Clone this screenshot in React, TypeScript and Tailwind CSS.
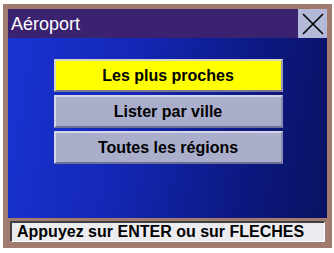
export default function App() {
  const items = ['Les plus proches', 'Lister par ville', 'Toutes les régions'];

  return (
    <div
      className="w-[334px] h-[253px] bg-white pl-[3px] pt-[4px]"
      style={{ fontFamily: '"Liberation Sans", Arial, sans-serif' }}
    >
      <div className="w-[329px] h-[244px] bg-[#a27b70] p-[5px] flex flex-col">
        {/* Title bar */}
        <div className="h-[29px] bg-[#3a2270] flex items-center justify-between">
          <span className="pl-[3px] text-white text-[18px] leading-none">Aéroport</span>
          <div className="w-[29px] h-[29px] bg-[#b5b9d9] flex items-center justify-center">
            <svg width="24" height="24" viewBox="0 0 24 24">
              <path d="M2 2 L22 22 M22 2 L2 22" stroke="#000" strokeWidth="1.6" fill="none" />
            </svg>
          </div>
        </div>

        {/* Body */}
        <div className="h-[180px] bg-[linear-gradient(100deg,#1a34d2_0%,#1428b8_35%,#0c1880_75%,#0a1260_100%)] flex flex-col items-center pt-[21px] gap-[3px] pl-[1px]">
          {items.map((label, i) => (
            <div
              key={label}
              className={`w-[229px] h-[33px] flex items-center justify-center text-[16px] font-bold text-black border-[2px] ${
                i === 0
                  ? 'bg-[#ffff00] border-t-[#d8d8c0] border-l-[#d8d8c0] border-b-[#7a7a90] border-r-[#9a9ab0]'
                  : 'bg-[#aaaecb] border-t-[#d4d7ea] border-l-[#d4d7ea] border-b-[#6a6e98] border-r-[#8a8eb0]'
              }`}
            >
              {label}
            </div>
          ))}
        </div>

        {/* Status bar */}
        <div className="flex-1 pt-[3px] px-[2px] pb-[1px]">
          <div className="h-full bg-[#ececf0] border-t-[2px] border-l-[2px] border-t-[#404040] border-l-[#404040] border-b border-r border-b-[#ffffff] border-r-[#ffffff] flex items-center pl-[5px]">
            <span className="text-[16px] font-bold text-black leading-none">Appuyez sur ENTER ou sur FLECHES</span>
          </div>
        </div>
      </div>
    </div>
  );
}
